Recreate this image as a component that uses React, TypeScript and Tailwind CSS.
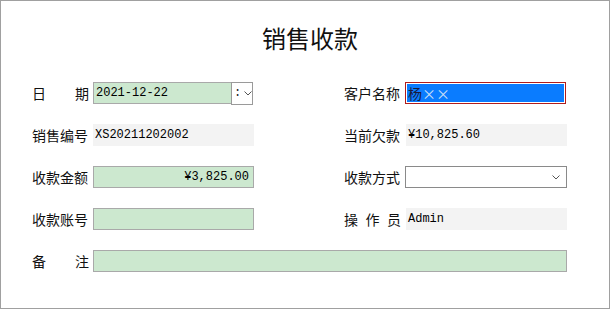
import type { ReactNode } from 'react'

const cjk = { fontFamily: '"Noto Sans CJK SC", "Noto Sans", sans-serif' }
const mono = { fontFamily: '"Liberation Mono", "Noto Sans CJK SC", monospace' }

function Label({ chars, spread }: { chars: string; spread?: boolean }) {
  return (
    <div
      className={`w-[57px] shrink-0 text-[14px] leading-none text-[#111] flex ${spread ? 'justify-between' : ''}`}
      style={cjk}
    >
      {spread ? chars.split('').map((c, i) => <span key={i}>{c}</span>) : chars}
    </div>
  )
}

function Green({ children, className = '' }: { children?: ReactNode; className?: string }) {
  return (
    <div
      className={`h-[22px] bg-[#cce8cf] border border-[#a9a9a9] flex items-center px-[2px] text-[12px] text-black ${className}`}
      style={mono}
    >
      {children}
    </div>
  )
}

function Grey({ children }: { children?: ReactNode }) {
  return (
    <div
      className="h-[22px] w-[161px] bg-[#f3f3f3] flex items-center px-[2px] text-[12px] text-black"
      style={mono}
    >
      {children}
    </div>
  )
}

function Chevron() {
  return (
    <svg width="8" height="5" viewBox="0 0 8 5" className="shrink-0">
      <path d="M0.5 0.5 L4 4 L7.5 0.5" fill="none" stroke="#555" strokeWidth="1" />
    </svg>
  )
}

export default function App() {
  return (
    <div className="w-[610px] h-[309px] border border-[#a0a0a0] bg-white flex flex-col">
      <h1
        className="mt-[21px] text-center pl-[10px] text-[24px] leading-[32px] text-[#111]"
        style={cjk}
      >
        销售收款
      </h1>

      <div className="mt-[28px] pl-[31px] flex flex-col gap-[20px]">
        {/* row 1 */}
        <div className="flex items-center h-[22px]">
          <div className="flex items-center w-[312px]">
            <Label chars="日期" spread />
            <div className="ml-[4px] flex items-center">
              <Green className="w-[139px]">2021-12-22</Green>
              <div className="h-[23px] w-[22px] -ml-px border border-[#9a9a9a] bg-white flex items-center pl-[2px] gap-[3px]">
                <span className="text-[12px] leading-none text-[#222]" style={mono}>:</span>
                <Chevron />
              </div>
            </div>
          </div>
          <div className="flex items-center">
            <Label chars="客户名称" />
            <div className="ml-[4px] w-[161px] h-[22px] border border-[#b01c1c] p-px">
              <div className="h-full bg-[#0a7cff] flex items-center px-[1px] text-[14px] leading-none" style={cjk}>
                <span className="text-[#1a1a3a]">杨</span>
                <span className="text-[#c9dcf5]">××</span>
              </div>
            </div>
          </div>
        </div>

        {/* row 2 */}
        <div className="flex items-center h-[22px]">
          <div className="flex items-center w-[312px]">
            <Label chars="销售编号" />
            <div className="ml-[4px]">
              <Grey>XS20211202002</Grey>
            </div>
          </div>
          <div className="flex items-center">
            <Label chars="当前欠款" />
            <div className="ml-[5px]">
              <Grey>¥10,825.60</Grey>
            </div>
          </div>
        </div>

        {/* row 3 */}
        <div className="flex items-center h-[22px]">
          <div className="flex items-center w-[312px]">
            <Label chars="收款金额" />
            <div className="ml-[4px]">
              <Green className="w-[161px] justify-end pr-[4px]">¥3,825.00</Green>
            </div>
          </div>
          <div className="flex items-center">
            <Label chars="收款方式" />
            <div className="ml-[4px] w-[162px] h-[22px] border border-[#8a8a8a] bg-white flex items-center justify-end pr-[6px]">
              <Chevron />
            </div>
          </div>
        </div>

        {/* row 4 */}
        <div className="flex items-center h-[22px]">
          <div className="flex items-center w-[312px]">
            <Label chars="收款账号" />
            <div className="ml-[4px]">
              <Green className="w-[161px]" />
            </div>
          </div>
          <div className="flex items-center">
            <Label chars="操作员" spread />
            <div className="ml-[5px]">
              <Grey>Admin</Grey>
            </div>
          </div>
        </div>

        {/* row 5 */}
        <div className="flex items-center h-[22px]">
          <Label chars="备注" spread />
          <div className="ml-[4px]">
            <Green className="w-[474px]" />
          </div>
        </div>
      </div>
    </div>
  )
}
